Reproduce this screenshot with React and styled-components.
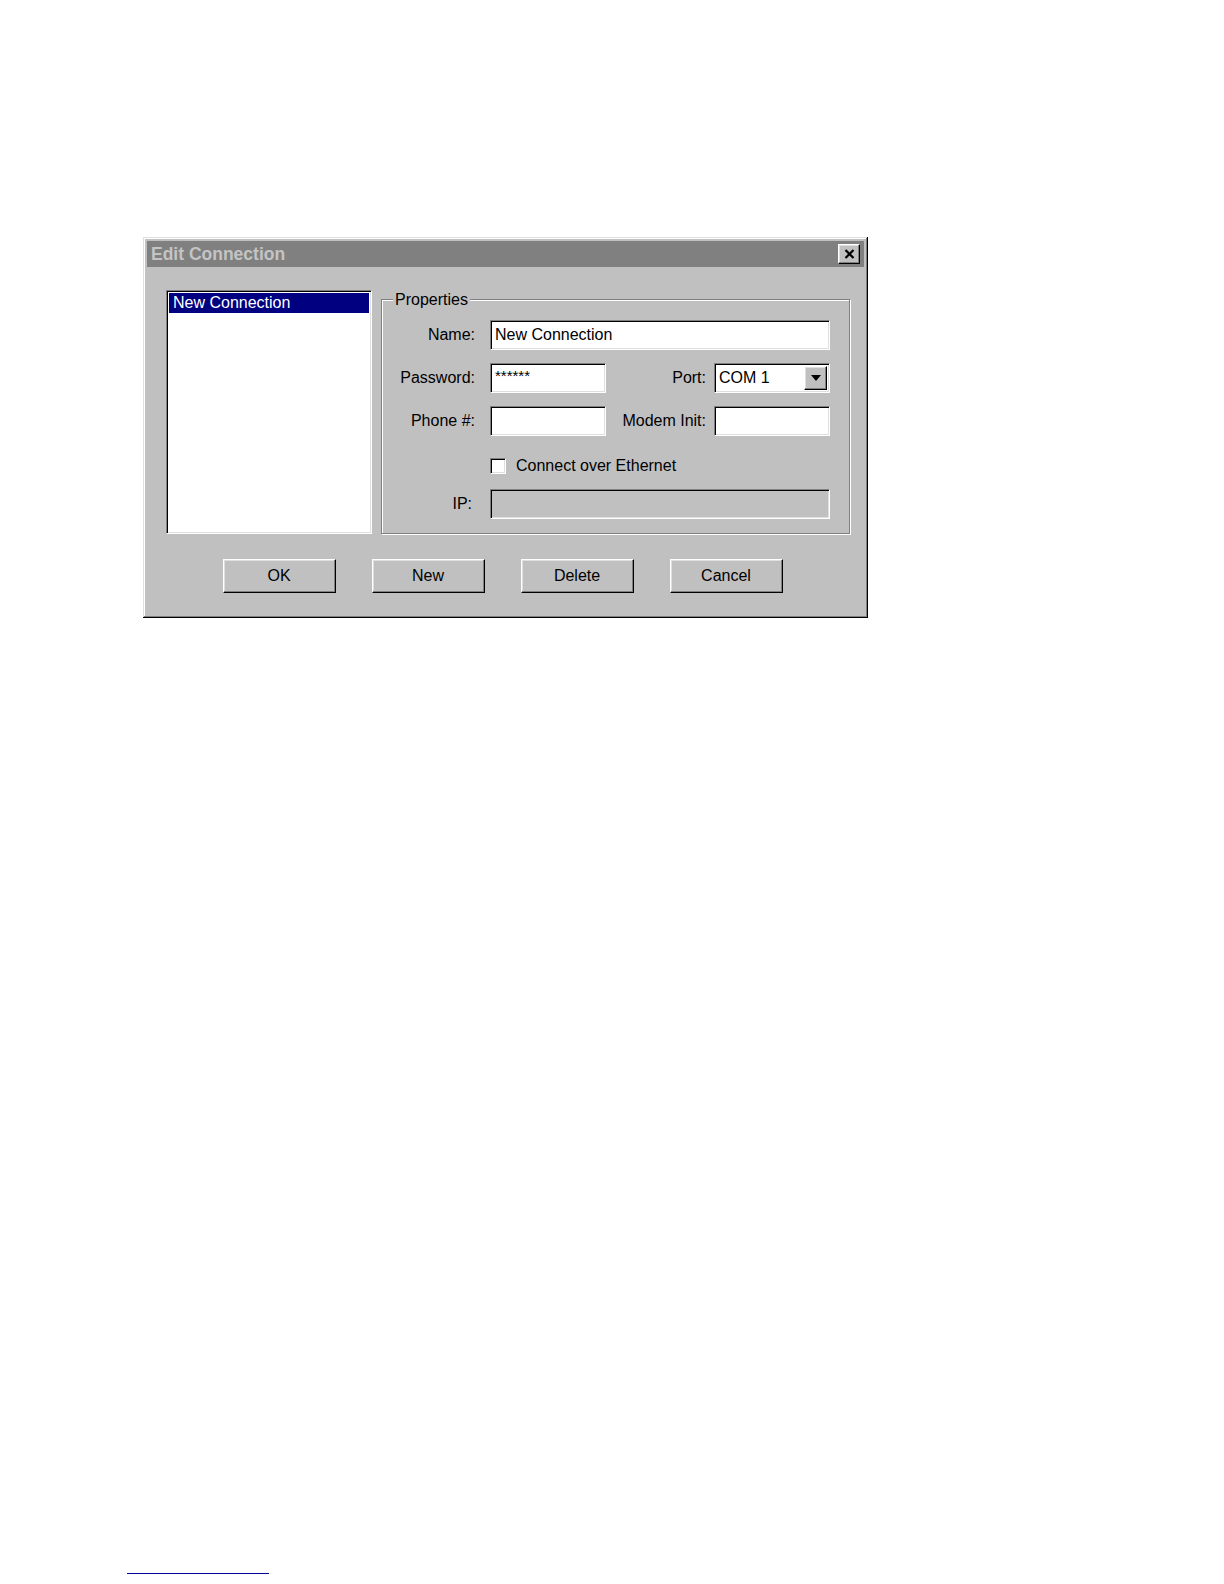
import styled, { createGlobalStyle, css } from "styled-components";

const GlobalStyle = createGlobalStyle`
  html, body {
    margin: 0;
    padding: 0;
    background: #ffffff;
  }
  body {
    font-family: "Liberation Sans", Arial, sans-serif;
    font-size: 16px;
    color: #000;
  }
`;

const raised = css`
  border: 1px solid;
  border-color: #ffffff #000000 #000000 #ffffff;
  box-shadow: inset -1px -1px 0 #808080, inset 1px 1px 0 #dfdfdf;
`;

const sunken = css`
  border: 1px solid;
  border-color: #808080 #ffffff #ffffff #808080;
  box-shadow: inset 1px 1px 0 #000000, inset -1px -1px 0 #dfdfdf;
`;

const Page = styled.div`
  padding: 237px 0 0 127px;
`;

const Dialog = styled.div`
  width: 725px;
  margin-left: 16px;
  box-sizing: border-box;
  background: #c0c0c0;
  padding: 4px 4px 25px;
  box-shadow: inset -1px -1px 0 #000000, inset 1px 1px 0 #dfdfdf,
    inset -2px -2px 0 #808080, inset 2px 2px 0 #ffffff;
`;

const TitleBar = styled.div`
  height: 26px;
  background: #808080;
  display: flex;
  align-items: center;
  justify-content: space-between;
  padding: 0 4px 0 4px;
`;

const Title = styled.div`
  font-weight: bold;
  font-size: 17.5px;
  color: #c4c4c4;
`;

const CloseButton = styled.div`
  ${raised};
  width: 22px;
  height: 20px;
  box-sizing: border-box;
  background: #c0c0c0;
  display: flex;
  align-items: center;
  justify-content: center;
`;

const Content = styled.div`
  display: flex;
  gap: 9px;
  padding: 23px 14px 0 19px;
`;

const ListBox = styled.div`
  ${sunken};
  width: 206px;
  height: 244px;
  box-sizing: border-box;
  background: #ffffff;
  padding: 2px;
`;

const ListItem = styled.div`
  height: 20px;
  line-height: 20px;
  padding-left: 4px;
  background: ${(p) => (p.selected ? "#000080" : "transparent")};
  color: ${(p) => (p.selected ? "#ffffff" : "#000000")};
  white-space: nowrap;
`;

const GroupBox = styled.div`
  position: relative;
  flex: 1;
  margin-top: 9px;
  border: 1px solid #808080;
  box-shadow: inset 1px 1px 0 #ffffff, 1px 1px 0 #ffffff;
  padding: 20px 19px 13px 0;
`;

const Legend = styled.div`
  position: absolute;
  top: -9px;
  left: 11px;
  padding: 0 2px;
  line-height: 18px;
  background: #c0c0c0;
`;

const Form = styled.div`
  display: grid;
  grid-template-columns: 100px 116px 1fr 116px;
  grid-template-rows: 30px 30px 30px 27px 30px;
  column-gap: 8px;
  row-gap: 13px;
  align-items: center;
`;

const Label = styled.div`
  text-align: right;
  padding-right: ${(p) => p.pad ?? 0}px;
  white-space: nowrap;
`;

const Field = styled.div`
  ${sunken};
  height: 30px;
  box-sizing: border-box;
  background: ${(p) => (p.disabled ? "#c0c0c0" : "#ffffff")};
  grid-column: ${(p) => (p.wide ? "2 / 5" : "auto")};
  padding: 0 4px;
  display: flex;
  align-items: center;
  white-space: nowrap;
  overflow: hidden;
`;

const Masked = styled.span`
  font-size: 15px;
  align-self: flex-start;
  margin-top: 3px;
`;

const Select = styled(Field)`
  padding: 2px 2px 2px 4px;
  justify-content: space-between;
`;

const DropButton = styled.div`
  ${raised};
  width: 23px;
  height: 24px;
  box-sizing: border-box;
  background: #c0c0c0;
  display: flex;
  align-items: center;
  justify-content: center;
`;

const CheckRow = styled.label`
  grid-column: 2 / 5;
  align-self: end;
  margin-bottom: 1px;
  display: flex;
  align-items: center;
  gap: 10px;
  white-space: nowrap;
`;

const CheckBox = styled.span`
  ${sunken};
  width: 16px;
  height: 16px;
  box-sizing: border-box;
  background: #ffffff;
`;

const Buttons = styled.div`
  display: flex;
  justify-content: center;
  gap: 36px;
  margin-top: 25px;
  padding-right: 6px;
`;

const Button = styled.div`
  ${raised};
  width: 113px;
  height: 34px;
  box-sizing: border-box;
  background: #c0c0c0;
  display: flex;
  align-items: center;
  justify-content: center;
`;

const FootRule = styled.div`
  width: 142px;
  margin-top: 955px;
  border-top: 1px solid #0000a0;
`;

const CloseIcon = () => (
  <svg width="11" height="10" viewBox="0 0 11 10">
    <path d="M1.5 1 L9.5 9 M9.5 1 L1.5 9" stroke="#000" strokeWidth="2.2" fill="none" />
  </svg>
);

const ArrowDown = () => (
  <svg width="10" height="6" viewBox="0 0 10 6">
    <polygon points="0,0 10,0 5,6" fill="#000" />
  </svg>
);

export default function App() {
  return (
    <Page>
      <GlobalStyle />
      <Dialog>
        <TitleBar>
          <Title>Edit Connection</Title>
          <CloseButton>
            <CloseIcon />
          </CloseButton>
        </TitleBar>
        <Content>
          <ListBox>
            <ListItem selected>New Connection</ListItem>
          </ListBox>
          <GroupBox>
            <Legend>Properties</Legend>
            <Form>
              <Label pad={7}>Name:</Label>
              <Field wide>New Connection</Field>

              <Label pad={7}>Password:</Label>
              <Field>
                <Masked>******</Masked>
              </Field>
              <Label>Port:</Label>
              <Select>
                <span>COM 1</span>
                <DropButton>
                  <ArrowDown />
                </DropButton>
              </Select>

              <Label pad={7}>Phone #:</Label>
              <Field />
              <Label>Modem Init:</Label>
              <Field />

              <span />
              <CheckRow>
                <CheckBox />
                Connect over Ethernet
              </CheckRow>

              <Label pad={10}>IP:</Label>
              <Field wide disabled />
            </Form>
          </GroupBox>
        </Content>
        <Buttons>
          <Button>OK</Button>
          <Button>New</Button>
          <Button>Delete</Button>
          <Button>Cancel</Button>
        </Buttons>
      </Dialog>
      <FootRule />
    </Page>
  );
}
